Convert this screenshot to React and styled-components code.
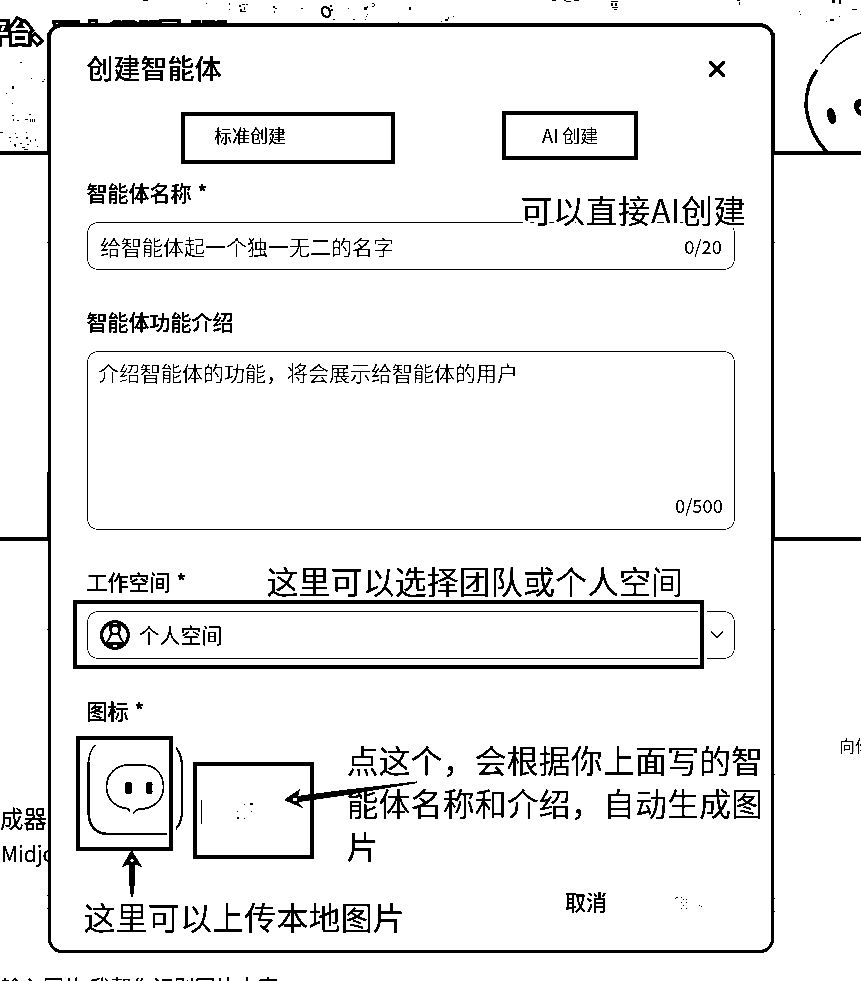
import React from "react";
import styled, { createGlobalStyle } from "styled-components";

const GlobalStyle = createGlobalStyle`
  html, body { margin: 0; padding: 0; background: #fff; }
  * { box-sizing: border-box; }
`;

const Page = styled.div`
  position: relative;
  width: 861px;
  height: 981px;
  overflow: hidden;
  background: #fff;
  color: #000;
  font-family: "Noto Sans CJK SC", "Noto Sans", sans-serif;
  filter: grayscale(1) brightness(0.78) contrast(40);
`;

const Hero = styled.section`
  height: 155px;
  border-bottom: 4px solid #000;
  padding-top: 12px;
  overflow: hidden;
`;

const HeroTitle = styled.div`
  margin-left: -15px;
  font-size: 24px;
  line-height: 37px;
  font-weight: 700;
  letter-spacing: -0.7px;
  color: #fff;
  white-space: nowrap;
  -webkit-text-stroke: 6px #000;
  paint-order: stroke fill;
`;

const Band = styled.section`
  height: 386px;
  border-bottom: 4px solid #000;
`;

const Gallery = styled.section`
  display: grid;
  grid-template-columns: 1fr 22px;
  height: 440px;
  padding-top: 189px;
  align-content: start;
  white-space: nowrap;
`;

const CardText = styled.div`
  padding-top: 70px;
`;

const CardLine = styled.div`
  font-size: ${(p) => p.$size}px;
  line-height: ${(p) => p.$line}px;
  margin: ${(p) => p.$margin || "0"};
`;

const SideText = styled.div`
  font-size: 16px;
  line-height: 30px;
  color: #555;
`;

const Modal = styled.main`
  position: absolute;
  left: 48px;
  top: 23px;
  width: 726px;
  height: 930px;
  padding: 21px 36px 0;
  border: 3px solid #000;
  border-top-width: 4px;
  border-radius: 14px;
  background: #fff;
`;

const Header = styled.header`
  display: flex;
  align-items: center;
  justify-content: space-between;
  height: 42px;
  padding-right: 9px;
`;

const Title = styled.h1`
  margin: 0 0 2px -0.5px;
  font-size: 27px;
  line-height: 40px;
  font-weight: 500;
`;

const Tabs = styled.nav`
  display: grid;
  grid-template-columns: 328px 1fr;
  height: 48px;
  margin-top: 21px;
  padding-left: 127px;
  align-items: center;
`;

const Tab = styled.span`
  font-size: 18px;
  line-height: 28px;
`;

const Label = styled.label`
  display: block;
  height: 28px;
  margin: ${(p) => p.$top}px 0 15px -0.5px;
  font-size: 21px;
  line-height: 27px;
  font-weight: 500;
  word-spacing: 1px;
`;

const Field = styled.div`
  display: flex;
  align-items: center;
  justify-content: space-between;
  height: 48px;
  padding: 0 11px 1px 12px;
  border: 1px solid #555;
  border-radius: 11px;
  font-size: 21px;
  line-height: 30px;
`;

const AreaField = styled(Field)`
  height: 179px;
  flex-direction: column;
  align-items: flex-start;
  padding: 5px 11px 9px 10px;
`;

const Placeholder = styled.span`
  color: #6c6c6c;
`;

const Counter = styled.span`
  align-self: ${(p) => p.$align || "auto"};
  padding-right: ${(p) => p.$pad || 0}px;
  font-size: 18.4px;
  color: #484848;
`;

const Workspace = styled.span`
  display: flex;
  align-items: center;
  gap: 9px;
  color: #222;
`;

const WorkspaceName = styled.span`
  margin: -1px 0 0 -0.5px;
`;

const IconRow = styled.div`
  height: 96px;
`;

const Footer = styled.footer`
  display: flex;
  height: 40px;
  margin-top: 45px;
  padding-left: 478px;
`;

const TextButton = styled.button`
  border: 0;
  padding: 0;
  background: none;
  color: #000;
  font: 500 21px/38px "Noto Sans CJK SC", sans-serif;
`;

const Mark = styled.div`
  position: absolute;
  left: ${(p) => p.$x}px;
  top: ${(p) => p.$y}px;
  width: ${(p) => p.$w}px;
  height: ${(p) => p.$h}px;
  border: 4px solid #000;
  border-radius: 1px;
  box-shadow: ${(p) => (p.$halo ? "0 0 0 3px #fff, inset 0 0 0 2px #fff" : "none")};
`;

const Note = styled.div`
  position: absolute;
  left: ${(p) => p.$x}px;
  top: ${(p) => p.$y}px;
  width: ${(p) => p.$w}px;
  font-size: 32px;
  line-height: 43px;
  letter-spacing: ${(p) => p.$track || 0.05}px;
  word-break: break-all;
  color: #222;
  -webkit-text-stroke: 5px #fff;
  paint-order: stroke fill;
`;

const Overlay = styled.svg`
  position: absolute;
  left: 0;
  top: 0;
  pointer-events: none;
`;

const CloseIcon = () => (
  <svg width="18" height="18" viewBox="0 0 18 18" stroke="#000" strokeWidth="3" strokeLinecap="round">
    <path d="M2.2 2.2 L15.8 15.8 M15.8 2.2 L2.2 15.8" />
  </svg>
);

const Chevron = () => (
  <svg width="12" height="9" viewBox="0 0 14 9" fill="none" stroke="#000" strokeWidth="1.700" overflow="visible">
    <path d="M0.2 1 L7 7.800 L13.800 1" />
  </svg>
);

const Avatar = () => (
  <svg width="30" height="30" viewBox="0 0 30 30">
    <circle cx="15" cy="15" r="14.800" />
    <g fill="#fff">
      <path d="M9.500 5 Q3 9 3 15 Q3 19.500 5.500 22.500 Q7 20 8.500 18.500 L10.300 13 Q8.500 9 9.500 5Z" />
      <path d="M20.500 5 Q27 9 27 15 Q27 19.500 24.500 22.500 Q23 20 21.500 18.500 L19.700 13 Q21.500 9 20.500 5Z" />
      <path d="M11.700 8 Q15 5 18.300 8 V12 Q15 15 11.700 12Z" />
      <path d="M11.700 14.800 H18.300 Q19.500 20 22.500 22 H7.500 Q10.500 20 11.700 14.800Z" />
      <rect x="12.500" y="3" width="5" height="1.500" />
      <rect x="12.500" y="25.300" width="5" height="1.500" />
    </g>
  </svg>
);

const BotIcon = () => (
  <svg width="98" height="96" viewBox="87 740 98 96" fill="none" stroke="#000">
    <path d="M95.500 745 Q88.500 751 88.500 764" strokeWidth="1.200" />
    <path d="M88.500 762 V812 Q89 834 109 834 H167" strokeWidth="2.200" />
    <path d="M173 745 Q182 752 182 766 V812 Q181 829 169 833" strokeWidth="1.900" />
    <path d="M129.500 812 Q130 809 127 808.500 C115 807 106.500 799 106.500 787 C106.500 773 117 765 129 765 H142 C155 765 163.500 774 163.500 787 C163.500 800 153 809 140 809 Q136 809.500 133 813.500" strokeWidth="1.400" />
    <rect x="125" y="782" width="7" height="12" rx="2.500" fill="#000" stroke="none" />
    <path d="M148 782 h3 q1.500 0 1.500 3 l-1 3 1 4 q0 2 -2 2 h-2.500 q-2 0 -2-2 v-8 q0-2 2-2Z" fill="#000" stroke="none" />
  </svg>
);

const specks = [
  [143, 0, 5, 1], [206, 3, 1, 1], [229, 3, 1, 2], [229, 9, 1, 1], [20, 62, 2, 1], [31, 78, 1, 1], [12, 86, 2, 3],
  [6, 93, 1, 1], [42, 81, 2, 1], [44, 79, 1, 1], [12, 103, 1, 1], [12, 115, 2, 1], [29, 114, 2, 1], [13, 119, 1, 2],
  [17, 120, 2, 1], [25, 119, 3, 1], [30, 119, 1, 3], [32, 119, 1, 3], [34, 119, 1, 3], [0, 132, 3, 1], [15, 133, 1, 1],
  [26, 132, 1, 1], [9, 137, 2, 1], [16, 137, 2, 1], [26, 137, 2, 2], [30, 140, 1, 2], [35, 139, 1, 2], [10, 141, 1, 1],
  [14, 144, 2, 2], [20, 143, 2, 1], [27, 144, 2, 1], [37, 146, 1, 1], [15, 146, 1, 1], [22, 147, 3, 1], [24, 149, 4, 1],
  [239, 5, 2, 2], [242, 4, 3, 1], [246, 4, 2, 1], [240, 9, 2, 3], [244, 7, 1, 3], [242, 11, 4, 1], [273, 6, 2, 2],
  [275, 8, 2, 1], [274, 11, 1, 2], [301, 8, 2, 1], [348, 8, 1, 1], [364, 7, 3, 3], [367, 6, 1, 2], [372, 3, 2, 1],
  [372, 6, 2, 1], [374, 4, 1, 2], [367, 14, 1, 1], [366, 16, 1, 1], [333, 19, 2, 1], [353, 19, 2, 1], [365, 19, 1, 1],
  [398, 22, 1, 1], [409, 7, 2, 3], [445, 19, 3, 2], [448, 17, 1, 2], [441, 21, 1, 1], [453, 16, 1, 1], [552, 0, 4, 1],
  [564, 0, 2, 1], [566, 1, 5, 1], [574, 0, 5, 1], [611, 1, 7, 1], [611, 3, 2, 3], [615, 3, 2, 3], [612, 7, 6, 1],
  [614, 9, 3, 1], [737, 0, 3, 1], [739, 2, 1, 3], [832, 0, 3, 3], [839, 0, 2, 4], [852, 9, 5, 1], [799, 11, 1, 1],
  [800, 14, 1, 1], [826, 21, 1, 1], [830, 19, 4, 2], [839, 16, 1, 1],
  [47, 33, 2, 121], [47, 472, 2, 68], [773, 33, 2, 121], [773, 472, 2, 68], [47, 242, 1, 1], [47, 629, 1, 1],
  [47, 895, 1, 1], [47, 908, 1, 1], [774, 242, 1, 1], [774, 629, 1, 1], [774, 774, 1, 1], [774, 898, 1, 1], [774, 911, 1, 1],
  [201, 800, 1, 24], [237, 817, 2, 2], [237, 811, 1, 1], [244, 804, 1, 1], [250, 803, 3, 2], [251, 811, 1, 1], [244, 818, 1, 1],
  [676, 897, 2, 1], [675, 898, 1, 1], [681, 897, 1, 1], [683, 899, 1, 1], [686, 899, 1, 1], [681, 902, 1, 1], [686, 902, 1, 1],
  [683, 905, 1, 1], [681, 908, 1, 1], [686, 908, 1, 1], [699, 905, 1, 1], [701, 906, 1, 1],
];

const HeroDrawing = () => (
  <Overlay width="861" height="155" viewBox="0 0 861 155" fill="none" stroke="#000">
    <path d="M861 33 Q836 41 821 64" strokeWidth="1.500" />
    <path d="M817 70 Q806 84 806 106 Q809 134 828 153" strokeWidth="3.300" />
    <ellipse cx="831.500" cy="116" rx="4" ry="8.500" transform="rotate(-12 831.500 116)" fill="#000" stroke="none" />
    <path d="M861 99 Q854 99 854 106 Q855 114 861 116 V111 Q857 108 861 105Z" fill="#000" stroke="none" />
    <ellipse cx="326" cy="12" rx="3.800" ry="5" transform="rotate(-25 326 12)" strokeWidth="2" />
    <path d="M330 6 h2 M332 9 v2" strokeWidth="1.200" />
  </Overlay>
);

const Annotations = () => (
  <Overlay width="861" height="981" viewBox="0 0 861 981">
    <g shapeRendering="crispEdges">
      {specks.map(([x, y, w, h], i) => <rect key={i} x={x} y={y} width={w} height={h} />)}
    </g>
    <path d="M131.500 850 L142 867 L134.500 864 V885 L133 897 H131 L129.500 885 V864 L122 867Z" />
    <circle cx="132" cy="860.500" r="1.900" fill="#fff" />
    <path d="M284 800 L300 789 L298 796 L340 790.500 L417 781.500 L417 783 L340 796 L298 802 L303 808Z" />
    <ellipse cx="295" cy="799.500" rx="2.600" ry="1.700" fill="#fff" />
  </Overlay>
);

export default function App() {
  return (
    <>
      <GlobalStyle />
      <Page>
        <Hero><HeroTitle>平台、Web SDK 及 API</HeroTitle></Hero>
        <Band />
        <Gallery>
          <CardText>
            <CardLine $size={23.5} $line={36}>成器</CardLine>
            <CardLine $size={21} $line={34} $margin="0 0 0 1px">Midjourney</CardLine>
            <CardLine $size={21} $line={32} $margin="100px 0 0 1px">输入图片 我帮你识别图片内容</CardLine>
          </CardText>
          <SideText>向你</SideText>
        </Gallery>
        <HeroDrawing />
        <Modal>
          <Header><Title>创建智能体</Title><CloseIcon /></Header>
          <Tabs><Tab>标准创建</Tab><Tab>AI 创建</Tab></Tabs>
          <Label $top={20}>智能体名称 *</Label>
          <Field>
            <Placeholder>给智能体起一个独一无二的名字</Placeholder>
            <Counter $pad={1}>0/20</Counter>
          </Field>
          <Label $top={38}>智能体功能介绍</Label>
          <AreaField>
            <Placeholder>介绍智能体的功能，将会展示给智能体的用户</Placeholder>
            <Counter $align="flex-end">0/500</Counter>
          </AreaField>
          <Label $top={38}>工作空间 *</Label>
          <Field>
            <Workspace><Avatar /><WorkspaceName>个人空间</WorkspaceName></Workspace>
            <Chevron />
          </Field>
          <Label $top={38}>图标 *</Label>
          <IconRow><BotIcon /></IconRow>
          <Footer><TextButton>取消</TextButton></Footer>
        </Modal>
        <Note $x={520.5} $y={188} $w={240} $track={0.6}>可以直接AI创建</Note>
        <Note $x={266.5} $y={559} $w={430}>这里可以选择团队或个人空间</Note>
        <Mark $x={181} $y={112} $w={214} $h={52} />
        <Mark $x={502} $y={111} $w={136} $h={49} />
        <Mark $x={73} $y={600} $w={631} $h={69} $halo />
        <Mark $x={76} $y={736} $w={97} $h={115} $halo />
        <Mark $x={193} $y={762} $w={121} $h={97} $halo />
        <Note $x={346.5} $y={738} $w={420}>点这个，会根据你上面写的智能体名称和介绍，自动生成图片</Note>
        <Note $x={83.5} $y={895} $w={340} $track={0.15}>这里可以上传本地图片</Note>
        <Annotations />
      </Page>
    </>
  );
}
